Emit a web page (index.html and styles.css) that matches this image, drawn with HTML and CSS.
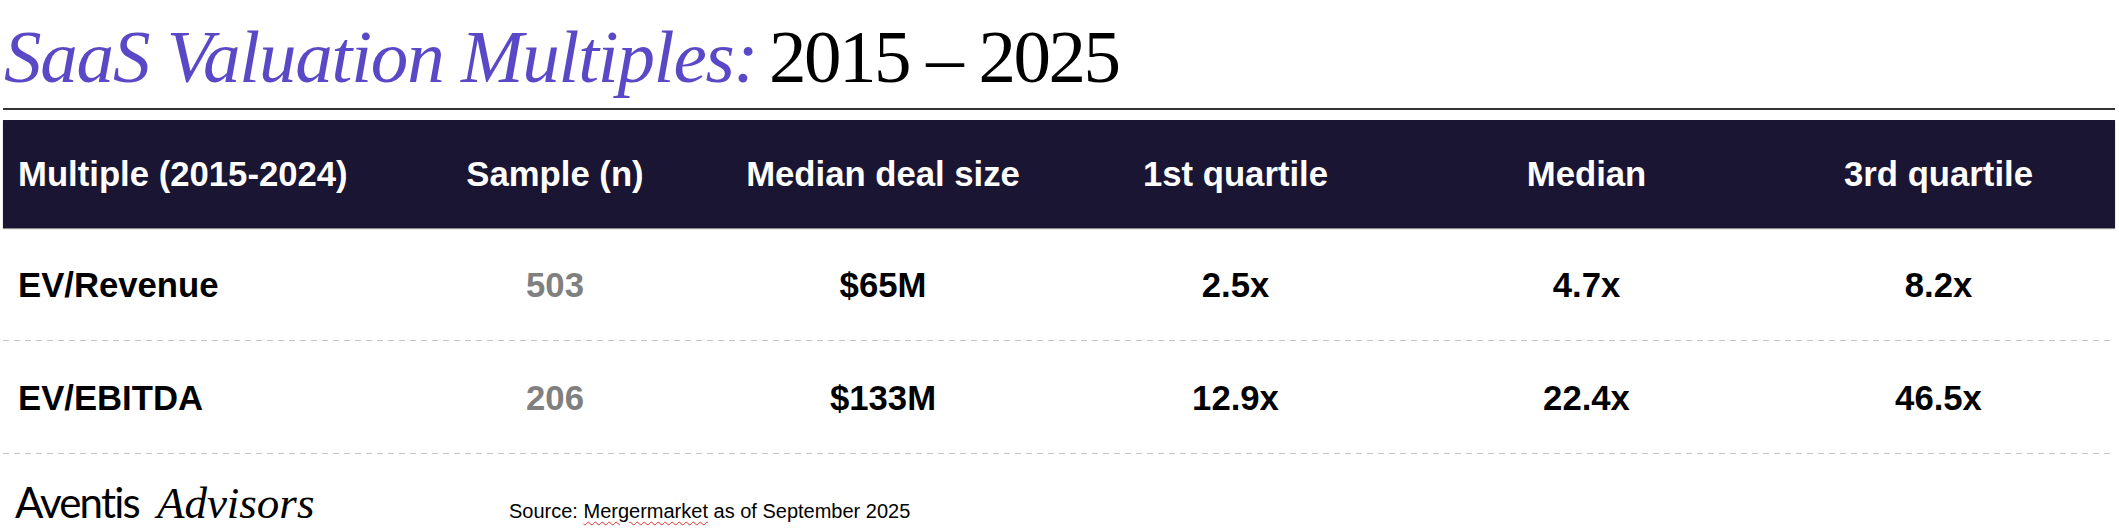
FILE: index.html
```html
<!DOCTYPE html>
<html lang="en">
<head>
<meta charset="utf-8">
<title>SaaS Valuation Multiples: 2015 – 2025</title>
<link rel="stylesheet" href="styles.css">
</head>
<body>
<div class="page">
  <h1 class="title"><span class="title-accent">SaaS Valuation Multiples:</span> <span class="title-years">2015 – 2025</span></h1>
  <div class="rule"></div>
  <div class="table">
    <div class="row row-head">
      <div class="cell cell-first">Multiple (2015-2024)</div>
      <div class="cell">Sample (n)</div>
      <div class="cell">Median deal size</div>
      <div class="cell">1st quartile</div>
      <div class="cell">Median</div>
      <div class="cell">3rd quartile</div>
    </div>
    <div class="row row-data">
      <div class="cell cell-first">EV/Revenue</div>
      <div class="cell cell-muted">503</div>
      <div class="cell">$65M</div>
      <div class="cell">2.5x</div>
      <div class="cell">4.7x</div>
      <div class="cell">8.2x</div>
    </div>
    <div class="row row-data">
      <div class="cell cell-first">EV/EBITDA</div>
      <div class="cell cell-muted">206</div>
      <div class="cell">$133M</div>
      <div class="cell">12.9x</div>
      <div class="cell">22.4x</div>
      <div class="cell">46.5x</div>
    </div>
  </div>
  <div class="footer">
    <div class="logo"><span class="logo-sans">Aventis</span><span class="logo-serif">Advisors</span></div>
    <div class="source">Source: <span class="spell">Mergermarket</span> as of September 2025</div>
  </div>
</div>
</body>
</html>
```

FILE: styles.css
```css
html, body {
  margin: 0;
  padding: 0;
  background: #ffffff;
}

.page {
  width: 2112px;
  padding: 0 4px 0 3px;
  font-family: "Liberation Sans", Arial, sans-serif;
  color: #000;
}

.title {
  margin: 19px 0 0 1px;
  font-family: "Liberation Serif", "Times New Roman", serif;
  font-weight: 400;
  font-size: 75px;
  line-height: 75px;
  white-space: nowrap;
}

.title-accent {
  font-style: italic;
  color: #5a49c6;
  letter-spacing: -1.2px;
}

.title-years {
  margin-left: -7px;
  color: #000;
  letter-spacing: -2.5px;
  word-spacing: 1px;
}

.rule {
  margin-top: 14px;
  height: 2px;
  background: #333333;
}

.table {
  margin-top: 10px;
}

.row {
  display: grid;
  grid-template-columns: 401fr 302fr 354fr 351fr 351fr 353fr;
  align-items: center;
  font-weight: 700;
  font-size: 34.7px;
  line-height: 40px;
}

.row-head {
  height: 108px;
  background: #1a1532;
  color: #ffffff;
  box-shadow: 0 1px 1px rgba(0, 0, 0, 0.45);
}

.row-data {
  height: 113px;
  background-image: repeating-linear-gradient(to right, #c4c4c4 0 6px, transparent 6px 11px);
  background-size: 100% 1px;
  background-position: left bottom;
  background-repeat: no-repeat;
}

.cell {
  text-align: center;
  white-space: nowrap;
}

.cell-first {
  text-align: left;
  padding-left: 15px;
}

.cell-muted {
  color: #808080;
}

.footer {
  display: grid;
  grid-template-columns: 494px 1fr;
  align-items: baseline;
  padding: 24px 0 0 12px;
}

.logo {
  white-space: nowrap;
  line-height: 48px;
}

.logo-sans {
  font-family: "Lato", "Liberation Sans", sans-serif;
  font-weight: 400;
  font-size: 42px;
  letter-spacing: -1.8px;
}

.logo-serif {
  margin-left: 18px;
  font-family: "Liberation Serif", "Times New Roman", serif;
  font-style: italic;
  font-size: 45px;
}

.source {
  font-size: 20px;
  white-space: nowrap;
}

.spell {
  text-decoration: underline wavy #e03030;
  text-decoration-thickness: 1px;
  text-underline-offset: 3px;
}
```
